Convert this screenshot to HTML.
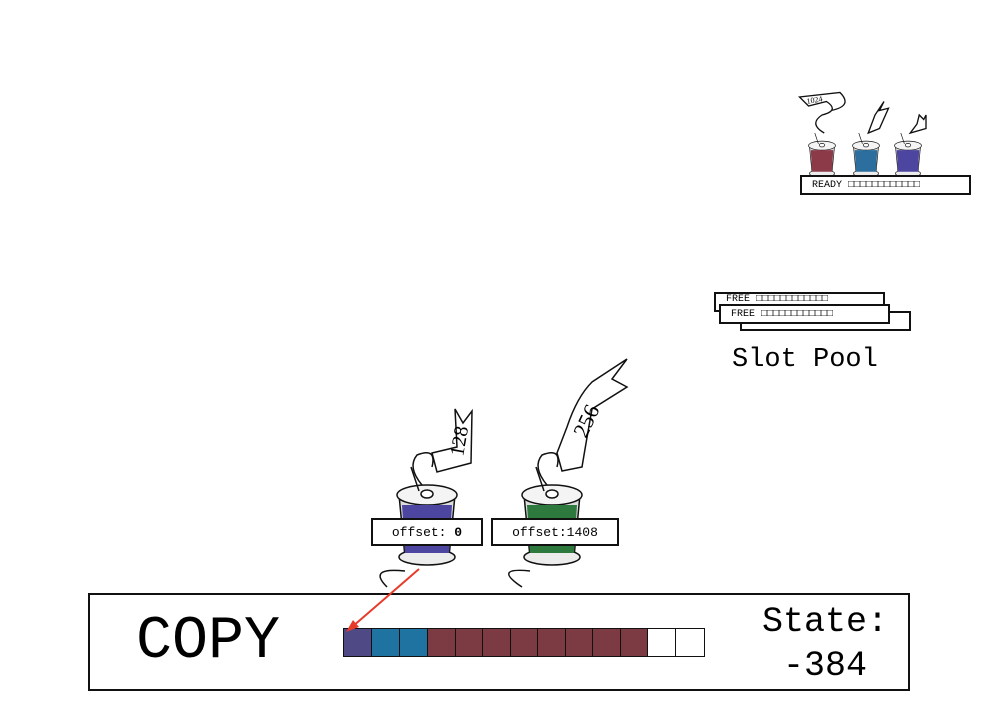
<!DOCTYPE html>
<html><head><style>
body{margin:0;width:1000px;height:703px;background:#fff;position:relative;overflow:hidden;font-family:"Liberation Mono",monospace;}
.abs{position:absolute;}
.box{position:absolute;border:2px solid #111;background:#fff;box-sizing:border-box;}
</style></head><body>
<svg class="abs" style="left:0;top:0" width="1000" height="703">
<defs>
<g id="spool">
<path d="M-28 -32 L-22 30 L22 30 L28 -32 Z" fill="#ddd" stroke="#111" stroke-width="1.5"/>
<ellipse cx="0" cy="-32" rx="30" ry="10" fill="#f4f4f4" stroke="#111" stroke-width="1.5"/>
<ellipse cx="0" cy="30" rx="28" ry="8" fill="#ececec" stroke="#111" stroke-width="1.5"/>
<ellipse cx="0" cy="-33" rx="6" ry="4" fill="#fff" stroke="#111" stroke-width="1.5"/>
<path d="M-16 -60 Q-12 -48 -8 -36" fill="none" stroke="#111" stroke-width="1.5"/>
</g>
</defs>
<g transform="translate(427,527)">
<use href="#spool"/>
<path d="M-25 -22 L-22 26 L22 26 L25 -22 Z" fill="#4d46a0"/>
<path d="M-22 44 Q-60 40 -40 60" fill="none" stroke="#111" stroke-width="1.5"/>
<path d="M-5 -42 Q-20 -60 -10 -72 Q10 -80 5 -60" fill="none" stroke="#111" stroke-width="1.5"/>
<path d="M5 -74 L30 -80 L28 -118 L36 -104 L45 -116 L44 -64 L10 -55 Z" fill="#fff" stroke="#111" stroke-width="1.5"/>
<text x="0" y="0" font-family="Liberation Serif" font-size="20" transform="translate(36,-70) rotate(-80)">128</text>
</g>
<g transform="translate(552,527)">
<use href="#spool"/>
<path d="M-25 -22 L-22 26 L22 26 L25 -22 Z" fill="#2e7a3e"/>
<path d="M-22 44 Q-60 40 -30 60" fill="none" stroke="#111" stroke-width="1.5"/>
<path d="M-5 -42 Q-20 -60 -10 -72 Q10 -80 5 -60" fill="none" stroke="#111" stroke-width="1.5"/>
<path d="M5 -74 L15 -100 Q25 -130 40 -145 L75 -168 L60 -148 L75 -140 L40 -118 Q35 -90 30 -60 L10 -56 Z" fill="#fff" stroke="#111" stroke-width="1.5"/>
<text x="0" y="0" font-family="Liberation Serif" font-size="22" transform="translate(34,-88) rotate(-65)">256</text>
</g>
<g transform="translate(822,160) scale(0.45)">
<use href="#spool"/><path d="M-25 -22 L-22 26 L22 26 L25 -22 Z" fill="#8c3a48"/>
<path d="M5 -60 Q-30 -80 0 -100 Q40 -110 10 -130 L-30 -120 L-50 -140 L40 -150 Q70 -120 20 -110" fill="none" stroke="#111" stroke-width="3"/>
</g>
<text x="807" y="104" font-size="8" transform="rotate(-10 807 104)" font-family="Liberation Serif">1024</text>
<g transform="translate(866,160) scale(0.45)">
<use href="#spool"/><path d="M-25 -22 L-22 26 L22 26 L25 -22 Z" fill="#2c6f9e"/>
<path d="M5 -60 L20 -100 L40 -130 L30 -110 L50 -115 L30 -70 Z" fill="#fff" stroke="#111" stroke-width="3"/>
</g>
<g transform="translate(908,160) scale(0.45)">
<use href="#spool"/><path d="M-25 -22 L-22 26 L22 26 L25 -22 Z" fill="#4d46a0"/>
<path d="M5 -60 L20 -80 L25 -100 L35 -90 L40 -100 L40 -70 Z" fill="#fff" stroke="#111" stroke-width="3"/>
</g>
</svg>

<div class="box" style="left:800px;top:175px;width:171px;height:20px;font-size:10px;padding:3px 0 0 10px;">READY □□□□□□□□□□□□</div>

<div class="box" style="left:740px;top:311px;width:171px;height:20px;"></div>
<div class="box" style="left:714px;top:292px;width:171px;height:20px;font-size:10px;padding:2px 0 0 10px;line-height:8px;overflow:hidden">FREE □□□□□□□□□□□□</div>
<div class="box" style="left:719px;top:304px;width:171px;height:20px;font-size:10px;padding:3px 0 0 10px;">FREE □□□□□□□□□□□□</div>
<div class="abs" style="left:732px;top:344px;font-size:27px;line-height:32px;">Slot Pool</div>

<div class="box" style="left:371px;top:518px;width:112px;height:28px;font-size:13px;text-align:center;line-height:25px;">offset: <b>0</b></div>
<div class="box" style="left:491px;top:518px;width:128px;height:28px;font-size:13px;text-align:center;line-height:25px;">offset:1408</div>

<div class="box" style="left:88px;top:593px;width:822px;height:98px;"></div>
<div class="abs" style="left:136px;top:610px;font-size:60px;line-height:64px;">COPY</div>
<div class="abs" style="left:762px;top:602px;font-size:35px;line-height:40px;">State:</div>
<div class="abs" style="left:783px;top:646px;font-size:35px;line-height:40px;">-384</div>
<div class="abs" style="left:343px;top:628px;display:flex;border:1.5px solid #111;">
<div style="width:27px;height:27px;background:#4f4a86;border-right:1.5px solid #111"></div>
<div style="width:27px;height:27px;background:#1f73a0;border-right:1.5px solid #111"></div>
<div style="width:27px;height:27px;background:#1f73a0;border-right:1.5px solid #111"></div>
<div style="width:26.5px;height:27px;background:#7c3b43;border-right:1.5px solid #111"></div>
<div style="width:26.5px;height:27px;background:#7c3b43;border-right:1.5px solid #111"></div>
<div style="width:26.5px;height:27px;background:#7c3b43;border-right:1.5px solid #111"></div>
<div style="width:26.5px;height:27px;background:#7c3b43;border-right:1.5px solid #111"></div>
<div style="width:26.5px;height:27px;background:#7c3b43;border-right:1.5px solid #111"></div>
<div style="width:26.5px;height:27px;background:#7c3b43;border-right:1.5px solid #111"></div>
<div style="width:26.5px;height:27px;background:#7c3b43;border-right:1.5px solid #111"></div>
<div style="width:26.5px;height:27px;background:#7c3b43;border-right:1.5px solid #111"></div>
<div style="width:26.5px;height:27px;background:#fff;border-right:1.5px solid #111"></div>
<div style="width:28px;height:27px;background:#fff;"></div>
</div>
<svg class="abs" style="left:0;top:0" width="1000" height="703">
<line x1="419" y1="569" x2="352" y2="627" stroke="#e83a2a" stroke-width="2"/>
<path d="M346 632 L353 620 L359 627 Z" fill="#e83a2a"/>
</svg>
</body></html>
